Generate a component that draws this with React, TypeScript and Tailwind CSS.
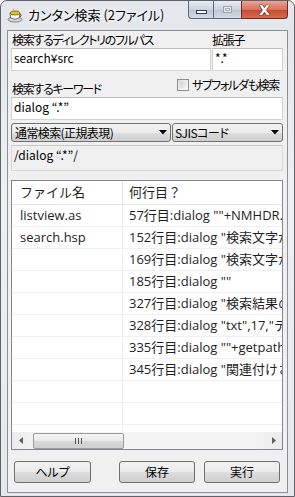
import React from "react";

const jp = "[font-family:'Noto_Sans_CJK_JP',sans-serif] [font-feature-settings:'palt']";

function TeaIcon() {
  return (
    <svg width="16" height="16" viewBox="0 0 16 16">
      <ellipse cx="8" cy="12.5" rx="7" ry="2.5" fill="#d8d8d8" stroke="#6a6a6a" strokeWidth="0.8" />
      <path d="M3 6 L3.6 11 Q8 13.5 12.4 11 L13 6 Z" fill="#f4f4f4" stroke="#555" strokeWidth="0.8" />
      <ellipse cx="8" cy="6" rx="5" ry="2" fill="#e8c020" stroke="#7a6010" strokeWidth="0.8" />
      <path d="M13 7 Q15.5 7.5 13.2 10" fill="none" stroke="#555" strokeWidth="1" />
      <path d="M6 2 Q7 1 6.5 3.5" fill="none" stroke="#999" strokeWidth="0.7" />
    </svg>
  );
}

function Arrow() {
  return (
    <svg width="8" height="5" viewBox="0 0 8 5">
      <path d="M0 0 H8 L4 4.5 Z" fill="#000" />
    </svg>
  );
}

const rows: [string, string][] = [
  ["listview.as", '57行目:dialog ""+NMHDR.c'],
  ["search.hsp", '152行目:dialog "検索文字が'],
  ["", '169行目:dialog "検索文字が'],
  ["", '185行目:dialog ""'],
  ["", '327行目:dialog "検索結果の'],
  ["", '328行目:dialog "txt",17,"テ'],
  ["", '335行目:dialog ""+getpath'],
  ["", '345行目:dialog "関連付けさ'],
  ["", ""],
  ["", ""],
];

const listFont = "[font-family:'Open_Sans','Noto_Sans_CJK_JP',sans-serif] [font-feature-settings:normal] text-[13px] tracking-normal";
const inputText = "text-[12px] tracking-normal";
const btnBg = "rounded-[3px] border border-[#707070] bg-[linear-gradient(180deg,#f2f2f2,#ebebeb_50%,#dddddd_51%,#cfcfcf)]";

export default function App() {
  return (
    <div className="w-[295px] h-[497px] flex flex-col rounded-t-[7px] border border-[#5f6369] bg-[linear-gradient(180deg,#e3e6ea_0%,#eef0f2_40%,#e6e8eb_100%)] overflow-hidden">
      {/* Title bar */}
      <div className="h-[29px] flex pl-[6px] shrink-0">
        <div className="mt-[6px] flex items-start">
          <TeaIcon />
          <span className={`${jp} ml-[5px] text-[13px] leading-[16px] text-black [text-shadow:0_0_6px_#fff,0_0_3px_#fff]`}>
            カンタン検索 (2ファイル)
          </span>
        </div>
        <div className="ml-auto mr-[6px] flex self-start h-[18px]">
          <div className="w-[26px] h-[18px] border border-[#5c6a7c] border-t-0 rounded-bl-[4px] bg-[linear-gradient(180deg,#e9edf2,#cdd4dd_50%,#bcc5d1_51%,#d3dae3)] flex items-center justify-center">
            <div className="w-[11px] h-[4px] bg-white border border-[#2c3a5c] mt-[4px]" />
          </div>
          <div className="w-[27px] h-[18px] border-b border-[#5c6a7c] bg-[linear-gradient(180deg,#e9edf2,#cdd4dd_50%,#bcc5d1_51%,#d3dae3)] flex items-center justify-center">
            <div className="w-[9px] h-[7px] border border-[#9aa3ae] bg-[#e6e9ed] flex items-center justify-center">
              <div className="w-[5px] h-[3px] border border-[#aab2bc]" />
            </div>
          </div>
          <div className="w-[47px] h-[18px] border border-[#6e2a20] border-t-0 rounded-br-[4px] bg-[linear-gradient(180deg,#eba596,#d8705c_50%,#c44a31_51%,#d76a4f)] flex items-center justify-center">
            <span className="[font-family:'DejaVu_Sans',sans-serif] text-[14px] font-bold leading-none text-white [text-shadow:0_0_1px_#3a1010,0_0_1px_#3a1010,0_0_1px_#3a1010]">X</span>
          </div>
        </div>
      </div>

      {/* Client area */}
      <div className={`${jp} ml-[6px] w-[281px] h-[463px] shrink-0 border border-[#8c9096] bg-[#f0f0f0] pl-[3px] pr-[4px] flex flex-col text-[12px] tracking-[-1.3px] text-black`}>
        <div className="h-[17px] flex pt-[2px] leading-[14px]">
          <span className="w-[201px] pl-[1px]">検索するディレクトリのフルパス</span>
          <span>拡張子</span>
        </div>
        <div className={`flex gap-[1px] h-[23px] ${inputText}`}>
          <div className="w-[200px] h-full bg-white border border-[#d3d3d3] border-t-[#bdbdbd] px-[2px] leading-[16px] pt-[1px]">search¥src</div>
          <div className="w-[71px] h-full bg-white border border-[#d3d3d3] border-t-[#bdbdbd] px-[2px] leading-[16px] pt-[1px]">*.*</div>
        </div>
        <div className="h-[26px] flex justify-between">
          <span className="self-end pl-[1px] leading-[14px] pb-[1px]">検索するキーワード</span>
          <div className="flex items-center self-start mt-[7px] mr-[4px] gap-[3px]">
            <div className="w-[12px] h-[12px] border border-[#8e8f8f] bg-[linear-gradient(135deg,#dcdcdc,#fdfdfd)] p-[2px]">
              <div className="w-full h-full bg-[linear-gradient(135deg,#cfd3d7,#f2f2f2)]" />
            </div>
            <span className="leading-[13px]">サブフォルダも検索</span>
          </div>
        </div>
        <div className={`h-[23px] bg-white border border-[#d3d3d3] border-t-[#bdbdbd] px-[2px] leading-[16px] pt-[1px] ${inputText}`}>dialog “.*”</div>
        <div className="flex gap-[1px] h-[19px] mt-[3px]">
          <div className={`w-[160px] h-full ${btnBg} flex items-center pl-[3px] pr-[3px]`}>
            <span className="flex-1 leading-[14px] text-[12px] tracking-[-0.6px]">通常検索(正規表現)</span>
            <Arrow />
          </div>
          <div className={`w-[111px] h-full ${btnBg} flex items-center pl-[2px] pr-[3px]`}>
            <span className="flex-1 leading-[14px] text-[12px] tracking-[-0.5px]">SJISコード</span>
            <Arrow />
          </div>
        </div>
        <div className={`h-[26px] mt-[3px] border border-[#d8d8d8] border-t-[#c8c8c8] bg-[#f0f0f0] px-[2px] pt-[1px] leading-[16px] ${inputText}`}>/dialog “.*”/</div>

        {/* List view */}
        <div className="mt-[9px] h-[270px] border border-[#828790] bg-white flex flex-col overflow-hidden">
          <div className={`${listFont} h-[24px] flex border-b border-[#e5e5e5] text-[#1e1e1e] shrink-0`}>
            <div className="w-[111px] border-r border-[#e5e5e5] pl-[8px] flex items-center">ファイル名</div>
            <div className="pl-[6px] flex items-center">何行目？</div>
          </div>
          <div className={`${listFont} flex-1 overflow-hidden text-[#1e1e1e]`}>
            {rows.map(([f, l], i) => (
              <div key={i} className="h-[22px] flex border-b border-[#f0f0f0]">
                <div className="w-[111px] shrink-0 border-r border-[#ececec] pl-[8px] flex items-center whitespace-nowrap">{f}</div>
                <div className="flex-1 min-w-0 pl-[6px] flex items-center whitespace-nowrap overflow-hidden">{l}</div>
              </div>
            ))}
            <div className="h-[22px] flex">
              <div className="w-[111px] shrink-0 border-r border-[#ececec]" />
            </div>
          </div>
          <div className="h-[17px] shrink-0 bg-[linear-gradient(90deg,#ebebeb,#f4f4f4_10%,#f4f4f4_90%,#ebebeb)] flex items-center">
            <div className="w-[17px] h-full flex items-center justify-center">
              <svg width="4" height="7" viewBox="0 0 4 7"><path d="M4 0 V7 L0 3.5 Z" fill="#606060" /></svg>
            </div>
            <div className="ml-[4px] w-[91px] h-[16px] rounded-[2px] border border-[#9a9a9a] bg-[linear-gradient(180deg,#f5f5f5,#e8e8e8_50%,#d9d9d9_51%,#d0d0d0)] flex items-center justify-center">
              <div className="flex gap-[2px]">
                <div className="w-[1px] h-[6px] bg-[#555]" />
                <div className="w-[1px] h-[6px] bg-[#555]" />
                <div className="w-[1px] h-[6px] bg-[#555]" />
              </div>
            </div>
            <div className="ml-auto w-[17px] h-full flex items-center justify-center">
              <svg width="4" height="7" viewBox="0 0 4 7"><path d="M0 0 V7 L4 3.5 Z" fill="#606060" /></svg>
            </div>
          </div>
        </div>

        {/* Buttons */}
        <div className="mt-[11px] flex pl-[3px] text-[12px] tracking-normal">
          <div className={`w-[77px] h-[22px] ${btnBg} flex items-center justify-center`}>ヘルプ</div>
          <div className={`ml-[28px] w-[76px] h-[22px] ${btnBg} flex items-center justify-center`}>保存</div>
          <div className={`ml-[9px] w-[76px] h-[22px] ${btnBg} flex items-center justify-center`}>実行</div>
        </div>
      </div>
    </div>
  );
}
